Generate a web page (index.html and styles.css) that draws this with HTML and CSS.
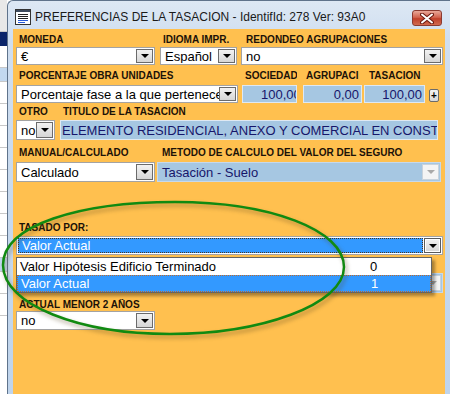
FILE: index.html
```html
<!DOCTYPE html>
<html lang="es">
<head>
    <meta charset="UTF-8">
    <title>Preferencias de la tasacion</title>
    <link rel="stylesheet" href="styles.css">
</head>
<body>
    <div class="screen">
        <!-- ventana de atras -->
        <div class="behind">
            <div class="bh-row"></div>
            <div class="bh-row sel"></div>
            <div class="bh-row"></div>
            <div class="bh-row blue"></div>
            <div class="bh-row"></div>
            <div class="bh-row"></div>
            <div class="bh-row"></div>
            <div class="bh-row"></div>
            <div class="bh-row"></div>
            <div class="bh-row"></div>
            <div class="bh-row"></div>
            <div class="bh-row"></div>
            <div class="bh-row blue"></div>
            <div class="bh-row"></div>
            <div class="bh-row"></div>
        </div>

        <div class="window">
            <div class="titlebar">
                <svg class="app-icon" width="16" height="16" viewBox="0 0 16 16">
                    <rect x="0.5" y="0.5" width="15" height="15" fill="#fff" stroke="#333"/>
                    <rect x="1" y="1" width="14" height="2" fill="#3d4a5c"/>
                    <rect x="3" y="5" width="10" height="1" fill="#222"/>
                    <rect x="3" y="7" width="10" height="1" fill="#222"/>
                    <rect x="3" y="9" width="10" height="1" fill="#222"/>
                    <rect x="3" y="11" width="10" height="1" fill="#2a5bd7"/>
                    <rect x="3" y="13" width="7" height="1" fill="#2a5bd7"/>
                </svg>
                <span class="title">PREFERENCIAS DE LA TASACION - IdentifId: 278 Ver: 93A0</span>
                <div class="close-btn">
                    <svg width="14" height="11" viewBox="0 0 14 11">
                        <path d="M2 1.5 L12 9.5 M12 1.5 L2 9.5" stroke="#6a1a10" stroke-width="4" stroke-linecap="round"/>
                        <path d="M2 1.5 L12 9.5 M12 1.5 L2 9.5" stroke="#fff" stroke-width="2" stroke-linecap="round"/>
                    </svg>
                </div>
            </div>

            <div class="client">
                <!-- fila 1 -->
                <div class="row r1">
                    <div class="field w-moneda">
                        <div class="lbl">MONEDA</div>
                        <div class="combo"><span class="val">€</span><span class="arrow"></span></div>
                    </div>
                    <div class="field w-idioma">
                        <div class="lbl">IDIOMA IMPR.</div>
                        <div class="combo"><span class="val">Español</span><span class="arrow"></span></div>
                    </div>
                    <div class="field w-redondeo">
                        <div class="lbl lbl-in">REDONDEO AGRUPACIONES</div>
                        <div class="combo"><span class="val">no</span><span class="arrow"></span></div>
                    </div>
                </div>

                <!-- fila 2 -->
                <div class="row r2">
                    <div class="field w-porcentaje">
                        <div class="lbl">PORCENTAJE OBRA UNIDADES</div>
                        <div class="combo"><span class="val">Porcentaje fase a la que pertenece</span><span class="arrow"></span></div>
                    </div>
                    <div class="field w-sociedad">
                        <div class="lbl">SOCIEDAD</div>
                        <div class="box num cut"><span>100,00</span></div>
                    </div>
                    <div class="field w-agrupaci">
                        <div class="lbl">AGRUPACI</div>
                        <div class="box num"><span>0,00</span></div>
                    </div>
                    <div class="field w-tasacion">
                        <div class="lbl lbl-in">TASACION</div>
                        <div class="box num"><span>100,00</span></div>
                    </div>
                    <div class="plus-btn">+</div>
                </div>

                <!-- fila 3 -->
                <div class="row r3">
                    <div class="field w-otro">
                        <div class="lbl">OTRO</div>
                        <div class="combo"><span class="val">no</span><span class="arrow"></span></div>
                    </div>
                    <div class="field w-titulo">
                        <div class="lbl">TITULO DE LA TASACION</div>
                        <div class="box text"><span>ELEMENTO RESIDENCIAL, ANEXO Y COMERCIAL EN CONSTRUCCION</span></div>
                    </div>
                </div>

                <!-- fila 4 -->
                <div class="row r4">
                    <div class="field w-manual">
                        <div class="lbl">MANUAL/CALCULADO</div>
                        <div class="combo"><span class="val">Calculado</span><span class="arrow"></span></div>
                    </div>
                    <div class="field w-metodo">
                        <div class="lbl lbl-in">METODO DE CALCULO DEL VALOR DEL SEGURO</div>
                        <div class="combo locked"><span class="val">Tasación - Suelo</span><span class="arrow"></span></div>
                    </div>
                </div>

                <!-- fila 5 -->
                <div class="row r5">
                    <div class="field w-tasado">
                        <div class="lbl">TASADO POR:</div>
                        <div class="combo open"><span class="val"><span class="hl">Valor Actual</span></span><span class="arrow"></span></div>
                    </div>
                </div>

                <!-- fila 6, tapada por la lista -->
                <div class="row r6">
                    <div class="field w-hidden">
                        <div class="lbl"></div>
                        <div class="combo locked"><span class="val"></span><span class="arrow"></span></div>
                    </div>
                </div>

                <!-- fila 7 -->
                <div class="row r7">
                    <div class="field w-actual">
                        <div class="lbl">ACTUAL MENOR 2 AÑOS</div>
                        <div class="combo"><span class="val">no</span><span class="arrow"></span></div>
                    </div>
                </div>

                <!-- lista desplegada -->
                <div class="dropdown">
                    <div class="opt"><span class="opt-name">Valor Hipótesis Edificio Terminado</span><span class="opt-id">0</span></div>
                    <div class="opt active"><span class="opt-name">Valor Actual</span><span class="opt-id">1</span></div>
                </div>
            </div>
        </div>

        <!-- marca verde -->
        <svg class="mark" width="450" height="394" viewBox="0 0 450 394">
            <path d="M175 202 C270 202 344 230 344 267 C344 305 260 334 170 334 C80 334 3 305 3 265 C3 225 80 202 175 202 Z"
                  fill="none" stroke="#118a11" stroke-width="2.5"/>
        </svg>
    </div>
</body>
</html>
```

FILE: styles.css
```css
* {
    box-sizing: border-box;
}

body {
    margin: 0;
    width: 450px;
    height: 394px;
    overflow: hidden;
    background: #fff;
    font-family: "Liberation Sans", Arial, sans-serif;
}

.screen {
    position: relative;
    display: flex;
    width: 450px;
    height: 394px;
}

/* ventana de atras */
.behind {
    width: 7px;
    display: flex;
    flex-direction: column;
    background: #fff;
    overflow: hidden;
}

.bh-row {
    height: 22px;
    border-bottom: 1px solid #c8c8c8;
    flex-shrink: 0;
}

.bh-row:first-child {
    height: 32px;
    background: #e8e8e8;
}

.bh-row.sel {
    height: 14px;
    background: #0a246a;
    border-bottom: none;
}

.bh-row.blue {
    height: 14px;
    background: #c2d8ef;
}

/* ventana */
.window {
    flex: 1;
    display: flex;
    flex-direction: column;
    border: 1px solid #5f738b;
    border-right: none;
    border-bottom: none;
    border-top-left-radius: 6px;
    background: linear-gradient(180deg, #dde8f4 0%, #cfdef0 10%, #bfd4ec 100%);
}

.titlebar {
    height: 28px;
    display: flex;
    align-items: center;
    padding: 3px 8px 0 7px;
}

.app-icon {
    flex-shrink: 0;
}

.title {
    flex: 1;
    margin-left: 4px;
    font-size: 12px;
    color: #1a1a1a;
    white-space: nowrap;
}

.close-btn {
    width: 30px;
    height: 16px;
    margin-top: 3px;
    display: flex;
    align-items: center;
    justify-content: center;
    border: 1px solid #8b3a30;
    border-radius: 3px;
    background: linear-gradient(180deg, #e9a899 0%, #d3644f 45%, #c0402a 55%, #d16a4e 100%);
}

/* zona naranja */
.client {
    position: relative;
    flex: 1;
    margin: 0 5px;
    padding: 5px 2px 0 3px;
    background: #ffc04f;
}

.row {
    display: flex;
    align-items: flex-end;
}

.field {
    display: flex;
    flex-direction: column;
}

.lbl {
    height: 12px;
    line-height: 12px;
    padding-left: 3px;
    font-size: 10px;
    font-weight: bold;
    color: #1c1208;
    white-space: nowrap;
    overflow: hidden;
}

.lbl-in {
    padding-left: 5px;
}

/* medidas de cada campo */
.w-moneda { width: 139px; }
.w-idioma { width: 77px; margin-left: 5px; }
.w-redondeo { width: 202px; margin-left: 4px; }

.w-porcentaje { width: 222px; }
.w-sociedad { width: 55px; margin-left: 4px; }
.w-agrupaci { width: 59px; margin-left: 6px; }
.w-tasacion { width: 61px; margin-left: 2px; }

.w-otro { width: 39px; }
.w-titulo { width: 378px; margin-left: 5px; }

.w-manual { width: 139px; }
.w-metodo { width: 284px; margin-left: 2px; }

.w-tasado { width: 427px; }
.w-hidden { width: 286px; margin-left: 141px; }
.w-actual { width: 139px; }

/* alturas de las filas */
.r1 .combo { height: 18px; margin-top: 1px; }

.r2 { margin-top: 5px; }
.r2 .combo,
.r2 .box { height: 18px; margin-top: 3px; }

.r3 { margin-top: 3px; }
.r3 .combo,
.r3 .box { height: 20px; margin-top: 2px; }

.r4 { margin-top: 7px; }
.r4 .combo { height: 20px; margin-top: 3px; }

.r5 { margin-top: 40px; }
.r5 .combo { height: 19px; margin-top: 2px; }

.r6 { margin-top: 5px; }
.r6 .combo { height: 20px; margin-top: 1px; }

.r7 { margin-top: 6px; }
.r7 .combo { height: 19px; }

/* combos */
.combo {
    display: flex;
    background: #fff;
    border: 1px solid #a3a3a3;
    padding: 1px;
}

.val {
    flex: 1;
    display: flex;
    align-items: center;
    padding-left: 3px;
    font-size: 13px;
    color: #000;
    white-space: nowrap;
    overflow: hidden;
}

.arrow {
    position: relative;
    width: 17px;
    flex-shrink: 0;
    border: 1px solid #6b6b6b;
    background: linear-gradient(180deg, #f2f2f2, #d6d6d6);
}

.arrow::after {
    content: "";
    position: absolute;
    left: 50%;
    top: 50%;
    margin: -2px 0 0 -4px;
    border-left: 4px solid transparent;
    border-right: 4px solid transparent;
    border-top: 4px solid #000;
}

.combo.locked {
    background: #a6c7e2;
    border-color: #c6d9ec;
}

.combo.locked .val {
    color: #16166a;
}

.combo.locked .arrow {
    border-color: #c9d3dc;
    background: #f4f4f4;
}

.combo.locked .arrow::after {
    border-top-color: #a9a9a9;
}

.combo.open .val {
    padding: 0 1px 0 0;
}

.hl {
    flex: 1;
    align-self: stretch;
    display: flex;
    align-items: center;
    padding-left: 3px;
    background: #3399ff;
    color: #fff;
    border: 1px dotted #4a3520;
}

.combo.open .arrow {
    border-color: #5a5a5a;
    box-shadow: inset 0 0 0 1px #fff;
}

/* cajas azules */
.box {
    display: flex;
    align-items: center;
    background: #a6c7e2;
    border: 1px solid #dfe9f3;
    font-size: 13px;
    color: #16166a;
    white-space: nowrap;
    overflow: hidden;
}

.box.num {
    justify-content: flex-end;
    padding-right: 2px;
}

/* el valor no cabe y se corta por la derecha */
.box.num.cut {
    justify-content: flex-start;
    padding: 0 0 0 18px;
}

.box.text {
    padding-left: 1px;
}

.plus-btn {
    width: 10px;
    height: 13px;
    margin: 0 0 1px 4px;
    display: flex;
    align-items: center;
    justify-content: center;
    border: 1px solid #6b6b6b;
    border-radius: 2px;
    background: linear-gradient(180deg, #f4f4f4, #d8d8d8);
    font-size: 10px;
    font-weight: bold;
    line-height: 1;
    color: #000;
}

/* lista desplegada */
.dropdown {
    position: absolute;
    left: 3px;
    top: 228px;
    width: 416px;
    background: #fff;
    border: 1px solid #646464;
    box-shadow: 3px 3px 3px rgba(0, 0, 0, 0.35);
}

.opt {
    display: flex;
    align-items: center;
    height: 17px;
    font-size: 13px;
    color: #000;
    white-space: nowrap;
}

.opt-name {
    width: 353px;
    padding-left: 3px;
}

.opt.active {
    background: #3399ff;
    color: #fff;
    border: 1px dotted #c06a2a;
}

/* marca verde encima de todo */
.mark {
    position: absolute;
    left: 0;
    top: 0;
    pointer-events: none;
    filter: drop-shadow(2px 3px 2px rgba(90, 70, 30, 0.45));
}
```
